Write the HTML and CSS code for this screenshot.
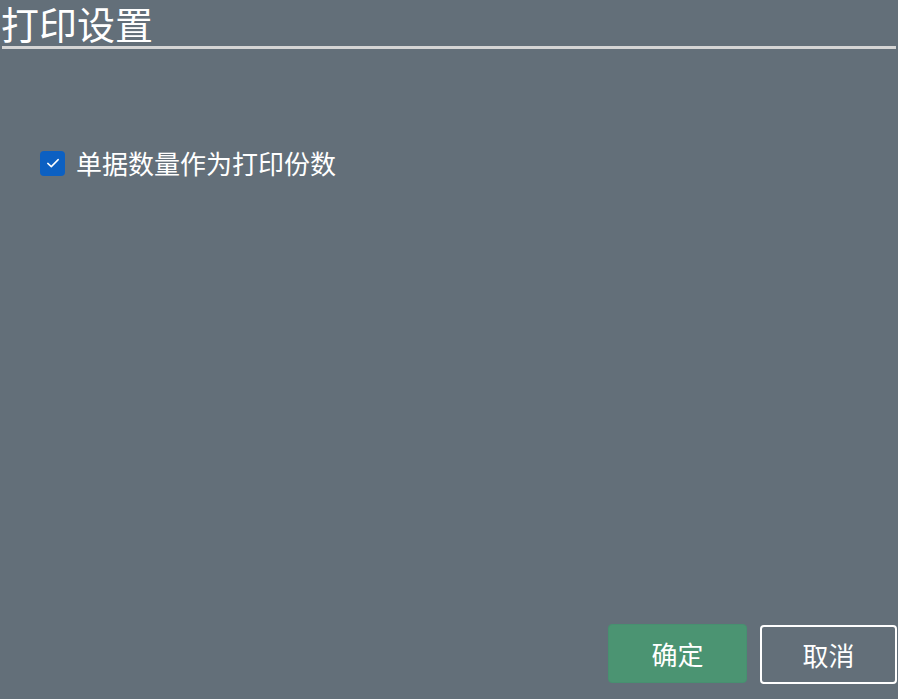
FILE: index.html
```html
<!DOCTYPE html>
<html lang="zh">
<head>
<meta charset="utf-8">
<title>打印设置</title>
<link rel="stylesheet" href="styles.css">
</head>
<body>
<div class="dialog">
  <div class="header">
    <h1 class="title">打印设置</h1>
    <div class="divider"></div>
  </div>
  <div class="content">
    <label class="check-row">
      <span class="checkbox">
        <svg width="16" height="16" viewBox="0 0 16 16"><path d="M2.8 8.4 L6.3 11.6 L13.2 4.6" fill="none" stroke="#ffffff" stroke-width="1.5" stroke-linecap="round" stroke-linejoin="round"/></svg>
      </span>
      <span class="check-label">单据数量作为打印份数</span>
    </label>
  </div>
  <div class="footer">
    <button class="btn btn-ok">确定</button>
    <button class="btn btn-cancel">取消</button>
  </div>
</div>
</body>
</html>
```
FILE: styles.css
```css
html, body {
  margin: 0;
  padding: 0;
  height: 100%;
  background: #636f79;
}
body {
  font-family: "Noto Sans CJK SC", "Noto Sans", sans-serif;
  color: #ffffff;
}
.dialog {
  height: 699px;
  display: flex;
  flex-direction: column;
}
.title {
  margin: 0;
  padding-left: 1px;
  font-size: 38px;
  font-weight: normal;
  line-height: 46px;
  height: 46px;
  white-space: nowrap;
}
.divider {
  margin: 0 2px;
  height: 3px;
  background: #d5d5d5;
}
.content {
  flex: 1;
  padding: 99px 40px 0 40px;
}
.check-row {
  display: flex;
  align-items: center;
  gap: 11px;
}
.checkbox {
  width: 25px;
  height: 25px;
  border-radius: 4px;
  background: #0c60c2;
  display: flex;
  align-items: center;
  justify-content: center;
}
.check-label {
  font-size: 26px;
  line-height: 30px;
}
.footer {
  display: flex;
  justify-content: flex-end;
  gap: 13px;
  padding: 0 1px 15px 0;
}
.btn {
  font-family: "Noto Sans CJK SC", sans-serif;
  font-size: 26px;
  color: #ffffff;
  height: 59px;
  border-radius: 4px;
  padding: 0;
  cursor: pointer;
}
.btn-ok {
  width: 139px;
  background: #4b9472;
  border: 1px solid #479070;
}
.btn-cancel {
  width: 137px;
  background: transparent;
  border: 2px solid #ffffff;
  margin-top: 1px;
}
```
